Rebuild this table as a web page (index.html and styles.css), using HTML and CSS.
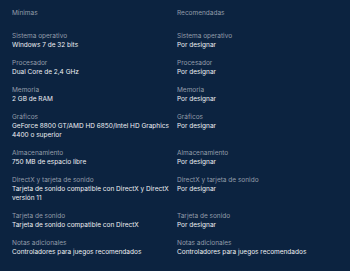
FILE: index.html
```html
<!DOCTYPE html>
<html lang="es">
<head>
<meta charset="utf-8">
<link rel="stylesheet" href="styles.css">
</head>
<body>
<div class="specs">
  <div class="col-head">Mínimas</div>
  <div class="col-head">Recomendadas</div>

  <div class="item"><div class="label">Sistema operativo</div><div class="value">Windows 7 de 32 bits</div></div>
  <div class="item"><div class="label">Sistema operativo</div><div class="value">Por designar</div></div>

  <div class="item"><div class="label">Procesador</div><div class="value">Dual Core de 2,4 GHz</div></div>
  <div class="item"><div class="label">Procesador</div><div class="value">Por designar</div></div>

  <div class="item"><div class="label">Memoria</div><div class="value">2 GB de RAM</div></div>
  <div class="item"><div class="label">Memoria</div><div class="value">Por designar</div></div>

  <div class="item"><div class="label">Gráficos</div><div class="value">GeForce 8800 GT/AMD HD 6850/Intel HD Graphics 4400 o superior</div></div>
  <div class="item"><div class="label">Gráficos</div><div class="value">Por designar</div></div>

  <div class="item"><div class="label">Almacenamiento</div><div class="value">750 MB de espacio libre</div></div>
  <div class="item"><div class="label">Almacenamiento</div><div class="value">Por designar</div></div>

  <div class="item"><div class="label">DirectX y tarjeta de sonido</div><div class="value">Tarjeta de sonido compatible con DirectX y DirectX versión 11</div></div>
  <div class="item"><div class="label">DirectX y tarjeta de sonido</div><div class="value">Por designar</div></div>

  <div class="item"><div class="label">Tarjeta de sonido</div><div class="value">Tarjeta de sonido compatible con DirectX</div></div>
  <div class="item"><div class="label">Tarjeta de sonido</div><div class="value">Por designar</div></div>

  <div class="item"><div class="label">Notas adicionales</div><div class="value">Controladores para juegos recomendados</div></div>
  <div class="item"><div class="label">Notas adicionales</div><div class="value">Controladores para juegos recomendados</div></div>
</div>
</body>
</html>
```
FILE: styles.css
```css
html, body {
  margin: 0;
  padding: 0;
  background: #0c2340;
}
body {
  font-family: Inter, "Noto Sans", sans-serif;
  font-size: 6.5px;
  line-height: 9px;
  color: #eceef2;
}
.specs {
  display: grid;
  grid-template-columns: 160px 160px;
  column-gap: 5px;
  row-gap: 9px;
  padding: 9px 12px 0 12px;
}
.col-head {
  color: #949daa;
  margin-bottom: 5px;
}
.label {
  color: #949daa;
}
.value {
  color: #eef0f4;
}
```
